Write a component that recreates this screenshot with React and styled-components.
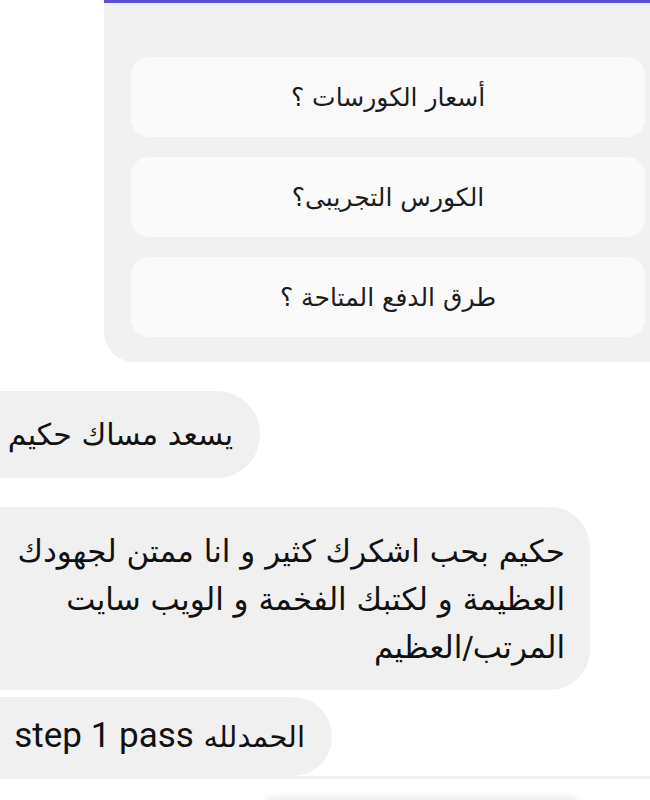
import React from 'react';
import styled, { createGlobalStyle } from 'styled-components';

const GlobalStyle = createGlobalStyle`
    body {
        margin: 0;
        background: #ffffff;
        font-family: "DejaVu Sans", "Noto Sans", sans-serif;
    }
`;

const Page = styled.div`
    width: 650px;
    height: 800px;
    overflow: hidden;
    display: flex;
    flex-direction: column;
`;

const Panel = styled.div`
    margin-left: 104px;
    width: 546px;
    box-sizing: border-box;
    background: #f1f1f1;
    border-top: 3px solid #5a4fd4;
    border-bottom-left-radius: 30px;
    padding: 54px 5px 25px 27px;
    display: flex;
    flex-direction: column;
    gap: 20px;
    flex-shrink: 0;
`;

const Option = styled.div`
    height: 80px;
    border-radius: 18px;
    background: #fafafa;
    display: flex;
    align-items: center;
    justify-content: center;
    font-size: 25px;
    color: #1c1c1c;
    direction: rtl;
`;

const Bubble = styled.div`
    width: ${p => p.$w}px;
    min-height: ${p => p.$h}px;
    margin-top: ${p => p.$top}px;
    flex-shrink: 0;
    box-sizing: border-box;
    background: #f0f0f0;
    border-radius: 0 ${p => p.$r}px ${p => p.$r}px 0;
    padding: ${p => p.$pad};
    direction: rtl;
    text-align: right;
    white-space: ${p => (p.$nowrap ? 'nowrap' : 'normal')};
    overflow: hidden;
    color: #111;
    font-size: ${p => p.$size}px;
    line-height: ${p => p.$lh}px;
`;

const Latin = styled.span`
    font-family: Roboto, "Liberation Sans", sans-serif;
    font-size: 35px;
`;

const Small = styled.span`
    font-size: 29px;
`;

const Divider = styled.div`
    height: 3px;
    flex-shrink: 0;
    background: #f0f0f0;
`;

const NextBubble = styled.div`
    margin: 17px 0 0 258px;
    width: 327px;
    height: 40px;
    flex-shrink: 0;
    border-radius: 20px;
    background: #f3f3f3;
    box-shadow: 0 -2px 6px rgba(0, 0, 0, 0.04);
`;

const options = ['أسعار الكورسات ؟', 'الكورس التجريبى؟', 'طرق الدفع المتاحة ؟'];

const App = () => {
    return (
        <Page>
            <GlobalStyle />
            <Panel>
                {options.map(o => <Option key={o}>{o}</Option>)}
            </Panel>
            <Bubble $w={260} $h={87} $top={29} $r={43} $size={30} $lh={87} $pad="0 27px 0 0" $nowrap>
                يسعد مساك حكيم
            </Bubble>
            <Bubble $w={590} $h={183} $top={29} $r={40} $size={31} $lh={48} $pad="20px 25px 19px 6px">
                حكيم بحب اشكرك كثير و انا ممتن لجهودك العظيمة و لكتبك الفخمة و الويب سايت المرتب/العظيم
            </Bubble>
            <Bubble $w={332} $h={78} $top={7} $r={39} $size={30} $lh={78} $pad="0 27px 0 0" $nowrap>
                <Small>الحمدلله</Small> <Latin>step 1 pass</Latin>
            </Bubble>
            <Divider />
            <NextBubble />
        </Page>
    );
};

export default App;
